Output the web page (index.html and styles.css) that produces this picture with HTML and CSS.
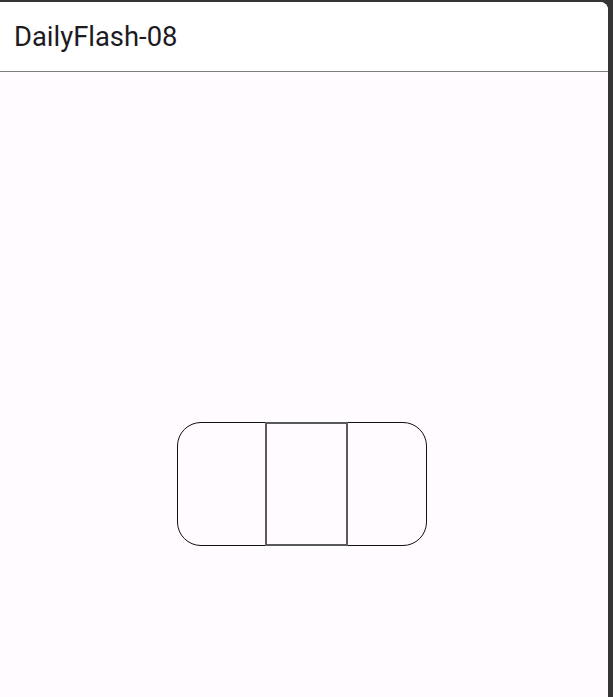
FILE: index.html
```html
<!DOCTYPE html>
<html>
<head>
<meta charset="utf-8">
<link rel="stylesheet" href="styles.css">
</head>
<body>
<div class="window">
  <header class="appbar">
    <h1 class="title">DailyFlash-08</h1>
  </header>
  <main class="content">
    <div class="pill">
      <div class="side left"></div>
      <div class="middle"></div>
      <div class="side right"></div>
    </div>
  </main>
</div>
</body>
</html>
```

FILE: styles.css
```css
html, body {
  margin: 0;
  padding: 0;
  height: 100%;
}
body {
  background: #353535;
  font-family: Roboto, "Noto Sans", sans-serif;
}
.window {
  margin: 2px 5px 0 0;
  height: calc(100% - 2px);
  background: #fffbfe;
  border-top-right-radius: 8px;
  overflow: hidden;
  display: flex;
  flex-direction: column;
}
.appbar {
  height: 69px;
  background: #ffffff;
  border-bottom: 1px solid #7c7c7c;
  display: flex;
  align-items: center;
  padding-left: 14px;
  box-sizing: content-box;
}
.title {
  margin: 0;
  font-size: 27.4px;
  font-weight: 400;
  color: #1c1b1f;
  padding-top: 1px;
}
.content {
  flex: 1;
  padding: 350px 0 0 177px;
}
.pill {
  width: 248px;
  height: 122px;
  border: 1px solid #111;
  border-radius: 24px;
  display: flex;
}
.side.left {
  width: 87px;
}
.middle {
  width: 79px;
  margin: -1px 0;
  border: 2px solid #5a5a5a;
}
.side.right {
  flex: 1;
}
```
